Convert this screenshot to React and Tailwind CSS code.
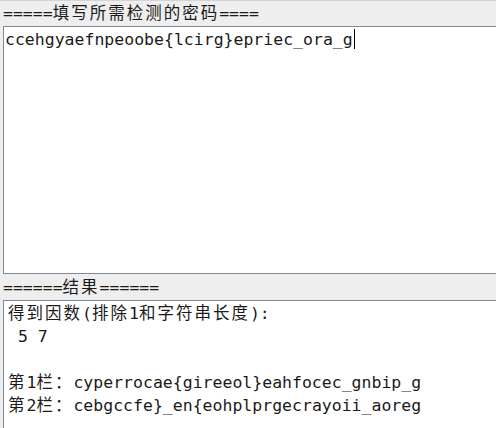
import React from "react";

const mono = { fontFamily: '"DejaVu Sans Mono", "Noto Sans CJK SC", monospace' };

const Cjk = ({ children }) => <span className="tracking-[2px]">{children}</span>;

export default function App() {
  return (
    <div
      className="w-[496px] h-[428px] overflow-hidden bg-[#eeeeee] text-[16.5px] leading-[23px] text-[#1a1a1a] flex flex-col"
      style={mono}>
      <div className="h-[26px] pl-[3px] flex items-center border-t border-[#d4d4d4] whitespace-pre">
        =====<Cjk>填写所需检测的密码</Cjk>====
      </div>

      <div className="h-[248px] ml-[3px] bg-white border-l border-t border-b border-[#7a8a99] pl-[1px] pt-[1px] whitespace-pre">
        <span>ccehgyaefnpeoobe{"{"}lcirg{"}"}epriec_ora_g</span>
        <span className="inline-block w-px h-[20px] bg-black align-[-4px] ml-[1px]"></span>
      </div>

      <div className="h-[26px] pl-[3px] flex items-center whitespace-pre">
        ======<Cjk>结果</Cjk>======
      </div>

      <div className="flex-1 ml-[3px] bg-white border-l border-t border-[#7a8a99] pl-[4px] pt-[1px] whitespace-pre">
        <div>
          <Cjk>得到因数</Cjk>(<Cjk>排除</Cjk>1<Cjk>和字符串长度</Cjk>):
        </div>
        <div> 5 7</div>
        <div>&nbsp;</div>
        <div>
          <Cjk>第</Cjk>1<Cjk>栏：</Cjk>cyperrocae{"{"}gireeol{"}"}eahfocec_gnbip_g
        </div>
        <div>
          <Cjk>第</Cjk>2<Cjk>栏：</Cjk>cebgccfe{"}"}_en{"{"}eohplprgecrayoii_aoreg
        </div>
      </div>
    </div>
  );
}
